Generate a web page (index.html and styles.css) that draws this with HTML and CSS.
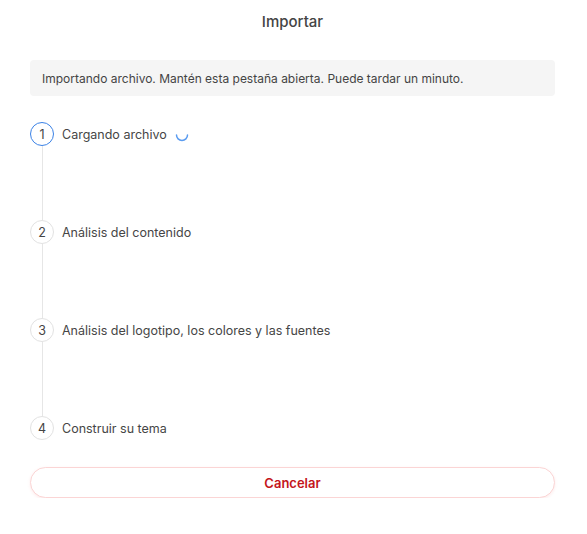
FILE: index.html
```html
<!DOCTYPE html>
<html lang="es">
<head>
<meta charset="utf-8">
<title>Importar</title>
<link rel="stylesheet" href="styles.css">
</head>
<body>
<main class="dialog">
  <h1 class="title">Importar</h1>
  <div class="notice">Importando archivo. Mantén esta pestaña abierta. Puede tardar un minuto.</div>
  <ol class="steps">
    <li class="step active">
      <div class="marker"><span class="num">1</span><span class="line"></span></div>
      <div class="label">Cargando archivo
        <svg class="spinner" width="14" height="14" viewBox="0 0 14 14"><path d="M1.5 7 A5.5 5.5 0 0 0 12.5 7" fill="none" stroke="#5b9cf0" stroke-width="1.5" stroke-linecap="round"/></svg>
      </div>
    </li>
    <li class="step">
      <div class="marker"><span class="num">2</span><span class="line"></span></div>
      <div class="label">Análisis del contenido</div>
    </li>
    <li class="step">
      <div class="marker"><span class="num">3</span><span class="line"></span></div>
      <div class="label">Análisis del logotipo, los colores y las fuentes</div>
    </li>
    <li class="step last">
      <div class="marker"><span class="num">4</span></div>
      <div class="label">Construir su tema</div>
    </li>
  </ol>
  <button class="cancel" type="button">Cancelar</button>
</main>
</body>
</html>
```
FILE: styles.css
```css
* { box-sizing: border-box; }
html, body { margin: 0; padding: 0; background: #fff; }
body {
  font-family: Inter, "Noto Sans", "Liberation Sans", sans-serif;
  color: #464646;
}
.dialog {
  width: 587px;
  padding: 13px 32px 0 30px;
}
.title {
  margin: 0;
  text-align: center;
  font-size: 15px;
  font-weight: 500;
  line-height: 18px;
  color: #444;
}
.notice {
  margin-top: 29px;
  height: 36px;
  display: flex;
  align-items: center;
  padding: 0 12px;
  background: #f5f5f5;
  border-radius: 4px;
  font-size: 12px;
  color: #444;
}
.steps {
  list-style: none;
  margin: 26px 0 0 0;
  padding: 0;
}
.step {
  display: flex;
  gap: 8px;
  height: 98px;
}
.step.last { height: 24px; }
.marker {
  width: 24px;
  display: flex;
  flex-direction: column;
  align-items: center;
}
.num {
  width: 24px;
  height: 24px;
  flex: none;
  border: 1px solid #e2e2e2;
  border-radius: 50%;
  display: flex;
  align-items: center;
  justify-content: center;
  font-size: 12.5px;
  color: #444;
}
.active .num {
  border: 1.5px solid #3b82e6;
}
.line {
  width: 1px;
  flex: 1;
  background: #e6e6e6;
}
.label {
  height: 24px;
  display: flex;
  align-items: center;
  font-size: 12.5px;
  color: #464646;
}
.spinner {
  margin-left: 8px;
  margin-top: 2px;
}
.cancel {
  display: block;
  width: 100%;
  height: 31px;
  margin-top: 27px;
  border: 1px solid #fbd5d5;
  border-radius: 16px;
  background: #fff;
  box-shadow: 0 1px 3px rgba(240, 120, 120, 0.15);
  font-family: inherit;
  font-size: 13px;
  font-weight: 600;
  color: #c4161c;
  cursor: pointer;
}
```
